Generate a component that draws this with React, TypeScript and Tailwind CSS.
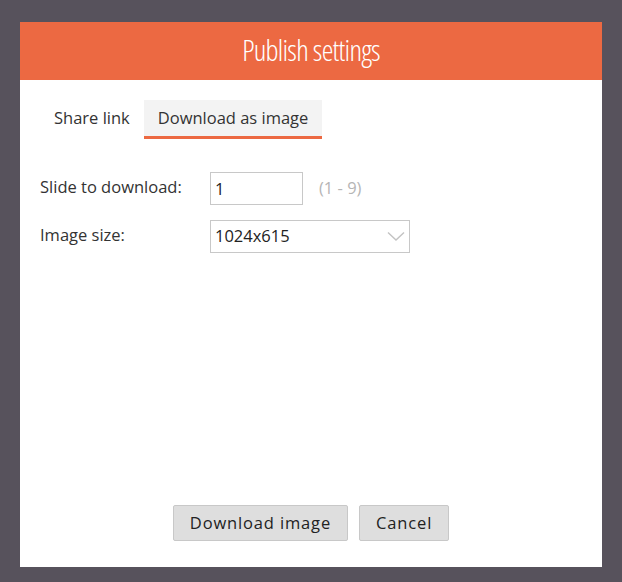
import React, { useState } from 'react';

const App: React.FC = () => {
  const [tab, setTab] = useState<'share' | 'image'>('image');
  const [slide, setSlide] = useState<string>('1');
  const [size, setSize] = useState<string>('1024x615');

  return (
    <div className="w-[622px] h-[582px] bg-[#57525c] pt-[22px] pl-[20px] font-['Open_Sans',sans-serif]">
      <div className="w-[582px] h-[545px] bg-white flex flex-col">
        {/* header */}
        <div className="h-[58px] bg-[#ec6942] flex items-center justify-center">
          <h1 className="text-white text-[29.5px] font-light [font-stretch:75%] tracking-[-0.7px] leading-none pb-[2px]">
            Publish settings
          </h1>
        </div>

        {/* tabs */}
        <div className="flex pl-[20px] pt-[20px]">
          <button
            onClick={() => setTab('share')}
            className={`h-[39px] px-[14px] text-[16.5px] text-[#333] border-b-[3px] ${
              tab === 'share' ? 'bg-[#f3f3f3] border-[#ec6942]' : 'border-transparent'
            }`}
          >
            Share link
          </button>
          <button
            onClick={() => setTab('image')}
            className={`h-[39px] px-[14px] text-[16.5px] text-[#333] border-b-[3px] ${
              tab === 'image' ? 'bg-[#f3f3f3] border-[#ec6942]' : 'border-transparent'
            }`}
          >
            Download as image
          </button>
        </div>

        {/* form */}
        <div className="flex flex-col gap-[15px] pl-[20px] pt-[33px]">
          <div className="flex items-center">
            <label htmlFor="slide" className="w-[170px] text-[16.5px] text-[#333] pb-[2px]">
              Slide to download:
            </label>
            <input
              id="slide"
              value={slide}
              onChange={(e) => setSlide(e.target.value)}
              className="w-[93px] h-[33px] border border-[#c8c8c8] px-[4px] text-[16.5px] text-[#222] outline-none"
            />
            <span className="ml-[16px] text-[16.5px] text-[#b5b5b5]">(1 - 9)</span>
          </div>
          <div className="flex items-center">
            <label className="w-[170px] text-[16.5px] text-[#333] pb-[2px]">Image size:</label>
            <div className="relative w-[200px] h-[33px] border border-[#c8c8c8] flex items-center">
              <span className="pl-[4px] text-[16.5px] text-[#222]">{size}</span>
              <select
                value={size}
                onChange={(e) => setSize(e.target.value)}
                className="absolute inset-0 opacity-0"
              >
                <option>1024x615</option>
                <option>1920x1152</option>
              </select>
              <svg
                className="absolute right-[4px] top-[10px]"
                width="18"
                height="11"
                viewBox="0 0 18 11"
                fill="none"
              >
                <path d="M1 1.5 L9 9 L17 1.5" stroke="#c3c3c3" strokeWidth="1.4" />
              </svg>
            </div>
          </div>
        </div>

        {/* buttons */}
        <div className="mt-auto pb-[26px] flex justify-center gap-[11px]">
          <button className="h-[36px] px-[16px] bg-[#dedede] border border-[#c8c8c8] rounded-[2px] text-[16.5px] tracking-[0.85px] text-[#222]">
            Download image
          </button>
          <button className="h-[36px] px-[16px] bg-[#dedede] border border-[#c8c8c8] rounded-[2px] text-[16.5px] tracking-[0.85px] text-[#222]">
            Cancel
          </button>
        </div>
      </div>
    </div>
  );
};

export default App;
